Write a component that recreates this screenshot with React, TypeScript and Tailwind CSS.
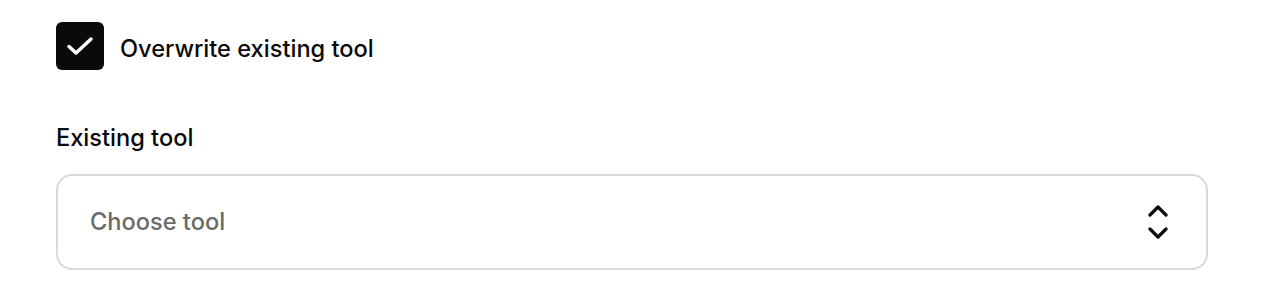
import { useState } from 'react';

export default function App() {
  const [overwrite, setOverwrite] = useState(true);

  return (
    <div className="min-h-screen bg-white pl-14 pr-[54px] pt-[22px] font-['Inter','Liberation_Sans',sans-serif] text-[#0a0a0a]">
      <label className="flex items-center gap-4 cursor-pointer select-none">
        <button
          type="button"
          onClick={() => setOverwrite(!overwrite)}
          className="flex h-12 w-12 shrink-0 items-center justify-center rounded-[6px] bg-[#0a0a0a]"
        >
          {overwrite && (
            <svg width="28" height="20" viewBox="0 0 28 20" fill="none">
              <path
                d="M3 10.5L10 17L25 3"
                stroke="white"
                strokeWidth="3.5"
                strokeLinecap="round"
                strokeLinejoin="round"
              />
            </svg>
          )}
        </button>
        <span className="pt-[6px] text-[23.6px] font-medium leading-none">Overwrite existing tool</span>
      </label>

      <div className="mt-[56px]">
        <div className="text-[23.6px] font-medium leading-none">Existing tool</div>
        <button
          type="button"
          className="mt-[24px] flex h-[96px] w-full items-center justify-between rounded-[16px] border-2 border-[#d9d9d9] bg-white pl-[32px] pr-[38px] text-left"
        >
          <span className="text-[23.6px] font-medium text-[#6a6a66]">Choose tool</span>
          <svg width="20" height="34" viewBox="0 0 20 34" fill="none">
            <path
              d="M2 10L10 2L18 10"
              stroke="#0a0a0a"
              strokeWidth="3.2"
              strokeLinecap="round"
              strokeLinejoin="round"
            />
            <path
              d="M2 24L10 32L18 24"
              stroke="#0a0a0a"
              strokeWidth="3.2"
              strokeLinecap="round"
              strokeLinejoin="round"
            />
          </svg>
        </button>
      </div>
    </div>
  );
}
